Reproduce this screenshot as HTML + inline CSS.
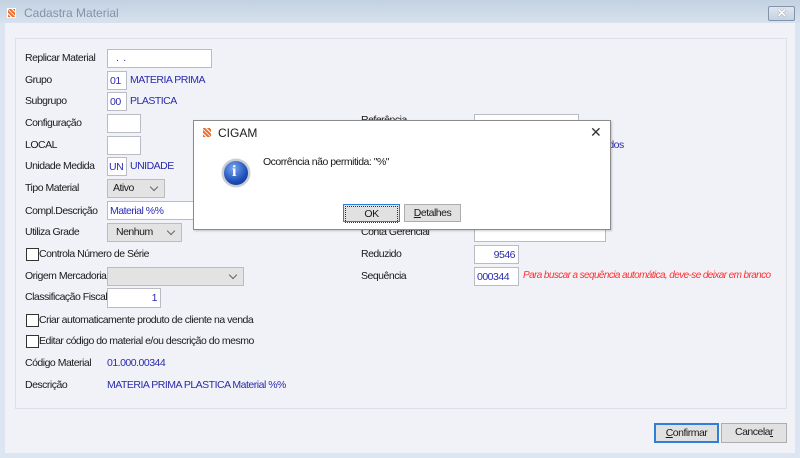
<!DOCTYPE html>
<html><head><meta charset="utf-8"><style>
*{box-sizing:border-box;margin:0;padding:0}
body{width:800px;height:458px;overflow:hidden;background:#dce6f2;font-family:"Liberation Sans",sans-serif;font-size:10.5px;letter-spacing:-0.5px;color:#1a1a1a;position:relative}
.a{position:absolute}
.t{position:absolute;line-height:14px;white-space:nowrap}
.in{position:absolute;background:#fff;border:1px solid #b9bcc4}
.bl{color:#2a2ab0}
.sel{position:absolute;background:#e3e3e3;border:1px solid #bcbcbc;line-height:16px;padding-left:5px}
.sel:after{content:"";position:absolute;right:7px;top:4px;width:5px;height:5px;border-right:1px solid #666;border-bottom:1px solid #666;transform:rotate(45deg)}
.cb{position:absolute;width:13px;height:13px;border:1px solid #333;background:#fff}
.btn{position:absolute;background:#e1e1e1;border:1px solid #adadad;text-align:center;line-height:17px}
</style></head><body>
<div class="a" style="left:0;top:0;width:800px;height:23px;background:linear-gradient(#c3d1e2,#d8e2ee)"></div>
<div class="a" style="left:7px;top:8px;width:9px;height:10px;background:#fff"><div style="position:absolute;left:1px;top:1px;width:7px;height:8px;background:repeating-linear-gradient(45deg,#f07030 0 2px,#fff 2px 3px)"></div></div>
<div class="t" style="left:24px;top:6px;font-size:12px;letter-spacing:0;color:#8393a6">Cadastra Material</div>
<div class="a" style="left:768px;top:6px;width:27px;height:15px;border:1px solid #8294ab;border-radius:2px;background:linear-gradient(#dfe6ef,#c6d2e0);text-align:center;line-height:13px;color:#fff;font-size:12px;font-weight:bold;text-shadow:0 0 1px #556">✕</div>
<div class="a" style="left:5px;top:23px;width:790px;height:430px;background:#f1f2f8"></div>
<div class="a" style="left:15px;top:38px;width:772px;height:371px;border:1px solid #dfe0e7"></div>

<div class="t" style="left:25px;top:51px">Replicar Material</div>
<div class="in" style="left:107px;top:49px;width:105px;height:19px"><span class="t bl" style="left:8px;top:1px">.&nbsp;&nbsp;.</span></div>
<div class="t" style="left:25px;top:73px">Grupo</div>
<div class="in" style="left:107px;top:71px;width:20px;height:19px"><span class="t bl" style="left:2px;top:2px">01</span></div>
<div class="t bl" style="left:130px;top:73px">MATERIA PRIMA</div>
<div class="t" style="left:25px;top:94px">Subgrupo</div>
<div class="in" style="left:107px;top:92px;width:20px;height:19px"><span class="t bl" style="left:2px;top:2px">00</span></div>
<div class="t bl" style="left:130px;top:94px">PLASTICA</div>
<div class="t" style="left:25px;top:116px">Configuração</div>
<div class="in" style="left:107px;top:114px;width:34px;height:19px"></div>
<div class="t" style="left:25px;top:138px">LOCAL</div>
<div class="in" style="left:107px;top:136px;width:34px;height:19px"></div>
<div class="t" style="left:25px;top:159px">Unidade Medida</div>
<div class="in" style="left:107px;top:157px;width:20px;height:19px"><span class="t bl" style="left:1px;top:2px">UN</span></div>
<div class="t bl" style="left:130px;top:159px">UNIDADE</div>
<div class="t" style="left:25px;top:181px">Tipo Material</div>
<div class="sel" style="left:107px;top:179px;width:58px;height:19px">Ativo</div>
<div class="t" style="left:25px;top:204px">Compl.Descrição</div>
<div class="in" style="left:107px;top:201px;width:100px;height:19px"><span class="t bl" style="left:2px;top:2px">Material %%</span></div>
<div class="t" style="left:25px;top:225px">Utiliza Grade</div>
<div class="sel" style="left:107px;top:223px;width:75px;height:19px;padding-left:8px">Nenhum</div>
<div class="cb" style="left:26px;top:248px"></div>
<div class="t" style="left:39px;top:247px">Controla Número de Série</div>
<div class="t" style="left:25px;top:269px">Origem Mercadoria</div>
<div class="sel" style="left:107px;top:267px;width:137px;height:19px"></div>
<div class="t" style="left:25px;top:290px">Classificação Fiscal</div>
<div class="in" style="left:107px;top:288px;width:54px;height:20px"><span class="t bl" style="right:3px;top:2px">1</span></div>
<div class="cb" style="left:26px;top:314px"></div>
<div class="t" style="left:39px;top:313px">Criar automaticamente produto de cliente na venda</div>
<div class="cb" style="left:26px;top:335px"></div>
<div class="t" style="left:39px;top:334px">Editar código do material e/ou descrição do mesmo</div>
<div class="t" style="left:25px;top:356px">Código Material</div>
<div class="t bl" style="left:107px;top:356px">01.000.00344</div>
<div class="t" style="left:25px;top:378px">Descrição</div>
<div class="t bl" style="left:107px;top:378px">MATERIA PRIMA PLASTICA Material %%</div>

<div class="t" style="left:361px;top:113px">Referência</div>
<div class="in" style="left:474px;top:114px;width:105px;height:19px"></div>
<div class="t bl" style="left:603px;top:138px">ados</div>
<div class="t" style="left:361px;top:225px">Conta Gerencial</div>
<div class="in" style="left:474px;top:223px;width:132px;height:19px"></div>
<div class="t" style="left:361px;top:247px">Reduzido</div>
<div class="in" style="left:474px;top:245px;width:45px;height:19px"><span class="t bl" style="right:3px;top:2px">9546</span></div>
<div class="t" style="left:361px;top:269px">Sequência</div>
<div class="in" style="left:474px;top:267px;width:45px;height:19px"><span class="t bl" style="left:2px;top:2px">000344</span></div>
<div class="t" style="left:523px;top:269px;color:#ff3030;font-style:italic;font-size:10px;letter-spacing:-0.6px">Para buscar a sequência automática, deve-se deixar em branco</div>

<div class="btn" style="left:654px;top:423px;width:65px;height:20px;border:2px solid #2f7fd8;line-height:16px"><u>C</u>onfirmar</div>
<div class="btn" style="left:721px;top:423px;width:66px;height:20px">Cancela<u>r</u></div>

<div class="a" style="left:193px;top:120px;width:418px;height:110px;background:#fff;border:1px solid #8a8a8a;box-shadow:1px 1px 2px rgba(0,0,0,.2)">
 <div class="a" style="left:9px;top:7px;width:8px;height:9px;background:repeating-linear-gradient(45deg,#f07030 0 2px,#fff 2px 3px)"></div>
 <div class="t" style="left:24px;top:5px;font-size:12px;letter-spacing:0">CIGAM</div>
 <div class="t" style="left:396px;top:4px;font-size:14px;letter-spacing:0;color:#333">✕</div>
 <div class="a" style="left:28px;top:38px;width:28px;height:28px;border-radius:50%;background:radial-gradient(circle at 40% 30%,#7aa8f0,#1d4fb8 60%,#0e2f7a);border:2px solid #c8ccd4;box-shadow:0 0 1px #666"></div>
 <div class="t" style="left:38px;top:44px;color:#fff;font-weight:bold;font-size:16px;font-family:'Liberation Serif',serif">i</div>
 <div class="t" style="left:69px;top:34px">Ocorrência não permitida: "%"</div>
 <div class="btn" style="left:149px;top:83px;width:57px;height:18px;border:1px solid #2f7fd8;line-height:15px"><span style="display:block;margin:1px;border:1px dotted #333">OK</span></div>
 <div class="btn" style="left:210px;top:83px;width:57px;height:18px;line-height:16px"><u>D</u>etalhes</div>
</div>
</body></html>
